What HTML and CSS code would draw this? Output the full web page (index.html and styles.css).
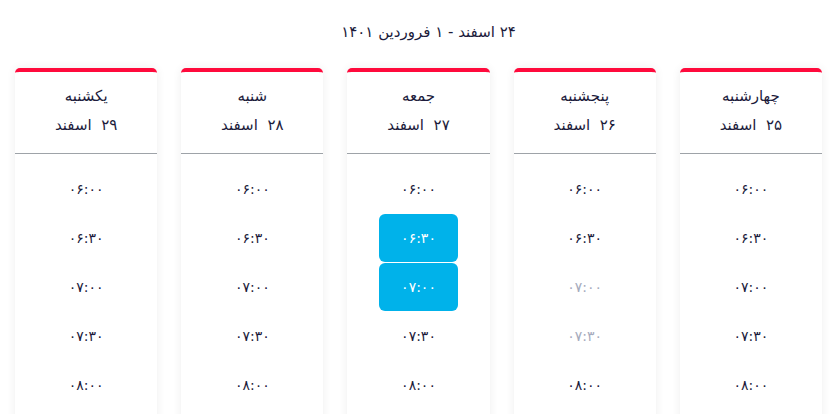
FILE: index.html
```html
<!DOCTYPE html>
<html lang="fa" dir="rtl">
<head>
<meta charset="utf-8">
<link rel="stylesheet" href="styles.css">
</head>
<body>
<div class="page">
  <h1 class="range">۲۴ اسفند - ۱ فروردین ۱۴۰۱</h1>
  <div class="days">
    <div class="day">
      <div class="day-head"><div class="day-name">چهارشنبه</div><div class="day-date">۲۵&nbsp; اسفند</div></div>
      <ul class="slots">
        <li class="slot">۰۶:۰۰</li><li class="slot">۰۶:۳۰</li><li class="slot">۰۷:۰۰</li><li class="slot">۰۷:۳۰</li><li class="slot">۰۸:۰۰</li>
      </ul>
    </div>
    <div class="day">
      <div class="day-head"><div class="day-name">پنجشنبه</div><div class="day-date">۲۶&nbsp; اسفند</div></div>
      <ul class="slots">
        <li class="slot">۰۶:۰۰</li><li class="slot">۰۶:۳۰</li><li class="slot disabled">۰۷:۰۰</li><li class="slot disabled">۰۷:۳۰</li><li class="slot">۰۸:۰۰</li>
      </ul>
    </div>
    <div class="day">
      <div class="day-head"><div class="day-name">جمعه</div><div class="day-date">۲۷&nbsp; اسفند</div></div>
      <ul class="slots">
        <li class="slot">۰۶:۰۰</li><li class="slot selected">۰۶:۳۰</li><li class="slot selected">۰۷:۰۰</li><li class="slot">۰۷:۳۰</li><li class="slot">۰۸:۰۰</li>
      </ul>
    </div>
    <div class="day">
      <div class="day-head"><div class="day-name">شنبه</div><div class="day-date">۲۸&nbsp; اسفند</div></div>
      <ul class="slots">
        <li class="slot">۰۶:۰۰</li><li class="slot">۰۶:۳۰</li><li class="slot">۰۷:۰۰</li><li class="slot">۰۷:۳۰</li><li class="slot">۰۸:۰۰</li>
      </ul>
    </div>
    <div class="day">
      <div class="day-head"><div class="day-name">یکشنبه</div><div class="day-date">۲۹&nbsp; اسفند</div></div>
      <ul class="slots">
        <li class="slot">۰۶:۰۰</li><li class="slot">۰۶:۳۰</li><li class="slot">۰۷:۰۰</li><li class="slot">۰۷:۳۰</li><li class="slot">۰۸:۰۰</li>
      </ul>
    </div>
  </div>
</div>
</body>
</html>
```
FILE: styles.css
```css
* { box-sizing: border-box; }
html, body { margin: 0; padding: 0; background: #fff; }
body {
  font-family: "DejaVu Sans", "Noto Sans", sans-serif;
  color: #1c1b3b;
  overflow: hidden;
}
.page {
  padding: 20px 14px 0 15px;
}
.range {
  margin: 0 0 0 20px;
  height: 24px;
  line-height: 24px;
  font-size: 15px;
  font-weight: normal;
  text-align: center;
}
.days {
  margin-top: 24px;
  display: grid;
  grid-template-columns: repeat(5, 1fr);
  gap: 24px;
}
.day {
  background: #fff;
  border-top: 4px solid #ff0a3c;
  border-radius: 5px 5px 0 0;
  box-shadow: 0 0 10px rgba(0, 0, 0, 0.07);
  height: 360px;
}
.day-head {
  padding: 12px 0 16px;
  border-bottom: 1px solid #9ea3a8;
  text-align: center;
}
.day-name {
  font-size: 15px;
  line-height: 24px;
}
.day-date {
  margin-top: 5px;
  font-size: 15px;
  line-height: 24px;
}
.slots {
  list-style: none;
  margin: 0;
  padding: 11px 0 0;
  display: flex;
  flex-direction: column;
  align-items: center;
}
.slot {
  width: 79px;
  height: 48px;
  margin-bottom: 1px;
  display: flex;
  align-items: center;
  justify-content: center;
  font-size: 14px;
  border-radius: 6px;
  direction: ltr;
}
.slot.disabled { color: #a6abbd; }
.slot.selected { background: #00b2ea; color: #fff; }
```
